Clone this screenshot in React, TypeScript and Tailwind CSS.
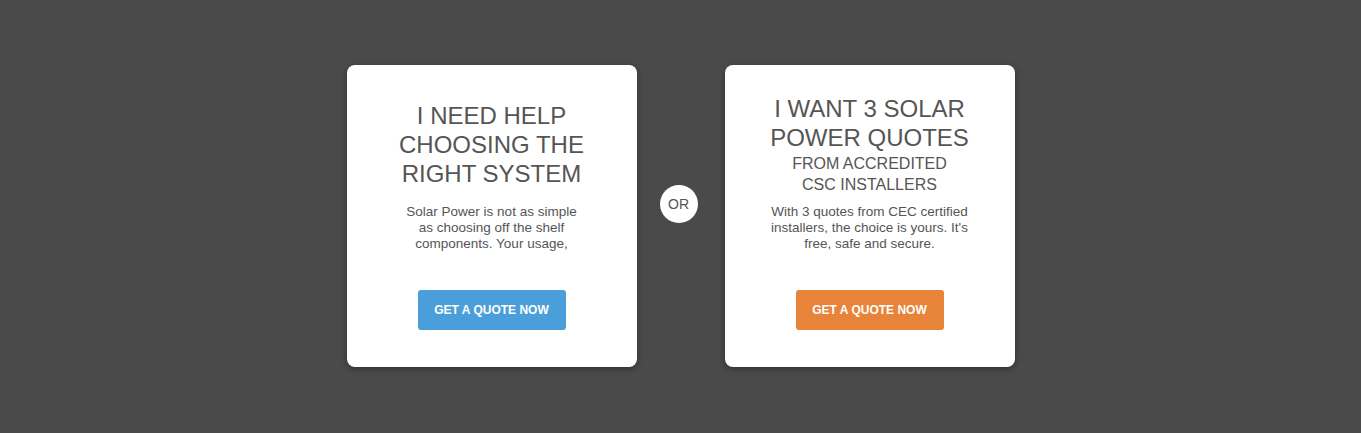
import React from 'react';

const font = { fontFamily: '"Liberation Sans", Arial, sans-serif' };

function Card({ title, sub, body, color }: { title: string[]; sub?: string[]; body: string[]; color: string }) {
  return (
    <div className="w-[290px] h-[302px] rounded-lg bg-white flex flex-col items-center px-6 pb-[37px] shadow-[0_2px_6px_rgba(0,0,0,0.35)]">
      <div className="flex-1 flex flex-col justify-end items-center text-center text-[#555]">
        <h2 className="text-[24px] leading-[29px] font-normal">
          {title.map((t, i) => <div key={i}>{t}</div>)}
        </h2>
        {sub && (
          <div className="text-[16px] leading-[21px] mt-[1px]">
            {sub.map((t, i) => <div key={i}>{t}</div>)}
          </div>
        )}
        <p className={`text-[13.5px] leading-[16px] ${sub ? 'mt-[9px]' : 'mt-[16px]'}`}>
          {body.map((t, i) => <span key={i} className="block">{t}</span>)}
        </p>
      </div>
      <button className={`mt-[38px] h-[40px] w-[148px] rounded-[3px] text-white text-[12px] font-bold ${color}`}>
        GET A QUOTE NOW
      </button>
    </div>
  );
}

export default function App() {
  return (
    <div className="h-[433px] w-full bg-[#4a4a4a] flex items-start justify-center pt-[65px]" style={font}>
      <Card
        title={['I NEED HELP', 'CHOOSING THE', 'RIGHT SYSTEM']}
        body={['Solar Power is not as simple', 'as choosing off the shelf', 'components. Your usage,']}
        color="bg-[#4a9fdb]"
      />
      <div className="mt-[120px] ml-[23px] mr-[27px] w-[38px] h-[38px] rounded-full bg-white flex items-center justify-center text-[14px] text-[#555]">
        OR
      </div>
      <Card
        title={['I WANT 3 SOLAR', 'POWER QUOTES']}
        sub={['FROM ACCREDITED', 'CSC INSTALLERS']}
        body={['With 3 quotes from CEC certified', "installers, the choice is yours. It's", 'free, safe and secure.']}
        color="bg-[#e8843a]"
      />
    </div>
  );
}
